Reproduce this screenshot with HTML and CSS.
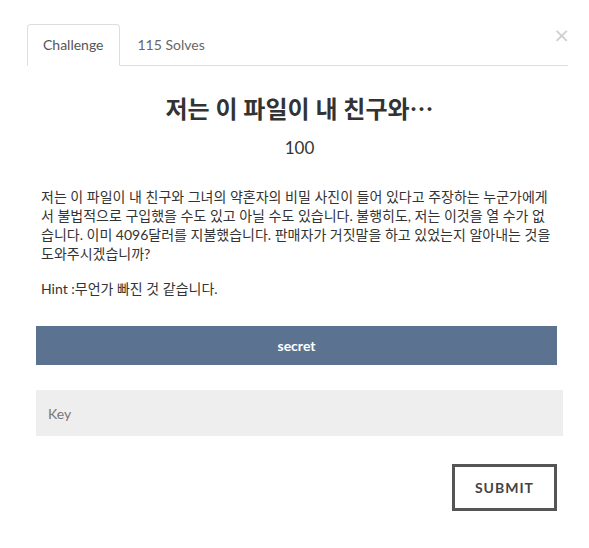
FILE: index.html
```html
<!DOCTYPE html>
<html lang="ko">
<head>
  <meta charset="UTF-8" />
  <meta name="viewport" content="width=device-width, initial-scale=1.0"/>
  <title>Challenge</title>
  <link rel="stylesheet" href="styles.css">
</head>
<body>
  <div class="modal">
    <button class="close" aria-label="Close">&times;</button>

    <ul class="tabs">
      <li class="tab active">Challenge</li>
      <li class="tab">115 Solves</li>
    </ul>

    <div class="challenge">
      <h3 class="challenge-name">저는 이 파일이 내 친구와<span class="cjk">…</span></h3>
      <h4 class="challenge-value">100</h4>

      <p class="challenge-desc">저는 이 파일이 내 친구와 그녀의 약혼자의 비밀 사진이 들어 있다고 주장하는 누군가에게서 불법적으로 구입했을 수도 있고 아닐 수도 있습니다. 불행히도, 저는 이것을 열 수가 없습니다. 이미 4096달러를 지불했습니다. 판매자가 거짓말을 하고 있었는지 알아내는 것을 도와주시겠습니까?</p>
      <p class="challenge-hint">Hint :무언가 빠진 것 같습니다.</p>

      <a class="file-button" href="#">secret</a>

      <input class="key-input" type="text" placeholder="Key">

      <div class="submit-row">
        <button class="submit">Submit</button>
      </div>
    </div>
  </div>
</body>
</html>
```

FILE: styles.css
```css
body {
  margin: 0;
  background: #fff;
  font-family: 'Lato', 'Noto Sans CJK KR', sans-serif;
  color: #333;
}

.modal {
  position: relative;
  padding: 24px 21px 20px 27px;
}

.close {
  position: absolute;
  top: 25px;
  right: 19px;
  background: none;
  border: none;
  padding: 0;
  font-size: 20px;
  line-height: 20px;
  color: #cfcfcf;
  font-family: 'DejaVu Sans', sans-serif;
  cursor: pointer;
}

.tabs {
  list-style: none;
  margin: 0;
  padding: 0;
  display: flex;
  gap: 2px;
  border-bottom: 1px solid #ddd;
}

.tab {
  padding: 0 15px;
  height: 40px;
  line-height: 40px;
  font-size: 14px;
  color: #666;
  margin-bottom: -1px;
  border: 1px solid transparent;
  border-radius: 4px 4px 0 0;
}

.tab.active {
  color: #555;
  background: #fff;
  border-color: #ddd #ddd #fff;
}

.challenge {
  padding: 0 5px 0 9px;
}

.challenge-name {
  text-align: center;
  font-size: 24px;
  font-weight: 700;
  color: #333;
  margin: 28px 0 0;
  line-height: 28px;
}

.cjk {
  font-family: 'Noto Sans CJK KR', sans-serif;
}

.challenge-value {
  text-align: center;
  font-size: 17px;
  font-weight: 400;
  margin: 14px 0 0;
  line-height: 22px;
}

.challenge-desc,
.challenge-hint {
  font-size: 14px;
  line-height: 19px;
  color: #333;
  margin: 0;
  padding: 0 11px 0 5px;
}

.challenge-desc {
  margin-top: 28px;
}

.challenge-hint {
  margin-top: 16px;
}

.file-button {
  display: block;
  margin: 28px 6px 0 0;
  height: 39px;
  line-height: 39px;
  background: #5b7290;
  color: #fff;
  text-align: center;
  font-size: 14px;
  font-weight: 700;
  text-decoration: none;
}

.key-input {
  display: block;
  box-sizing: border-box;
  width: 100%;
  height: 46px;
  margin-top: 25px;
  padding: 0 12px;
  border: none;
  background: #eee;
  font-family: 'Lato', sans-serif;
  font-size: 14px;
  color: #333;
}

.key-input::placeholder {
  color: #777;
}

.submit-row {
  display: flex;
  justify-content: flex-end;
  margin-top: 28px;
  padding-right: 6px;
}

.submit {
  height: 47px;
  padding: 0 20px;
  background: #fff;
  border: 3px solid #555;
  color: #444;
  font-family: 'Lato', sans-serif;
  font-size: 14px;
  font-weight: 700;
  letter-spacing: 1px;
  text-transform: uppercase;
  cursor: pointer;
}
```
